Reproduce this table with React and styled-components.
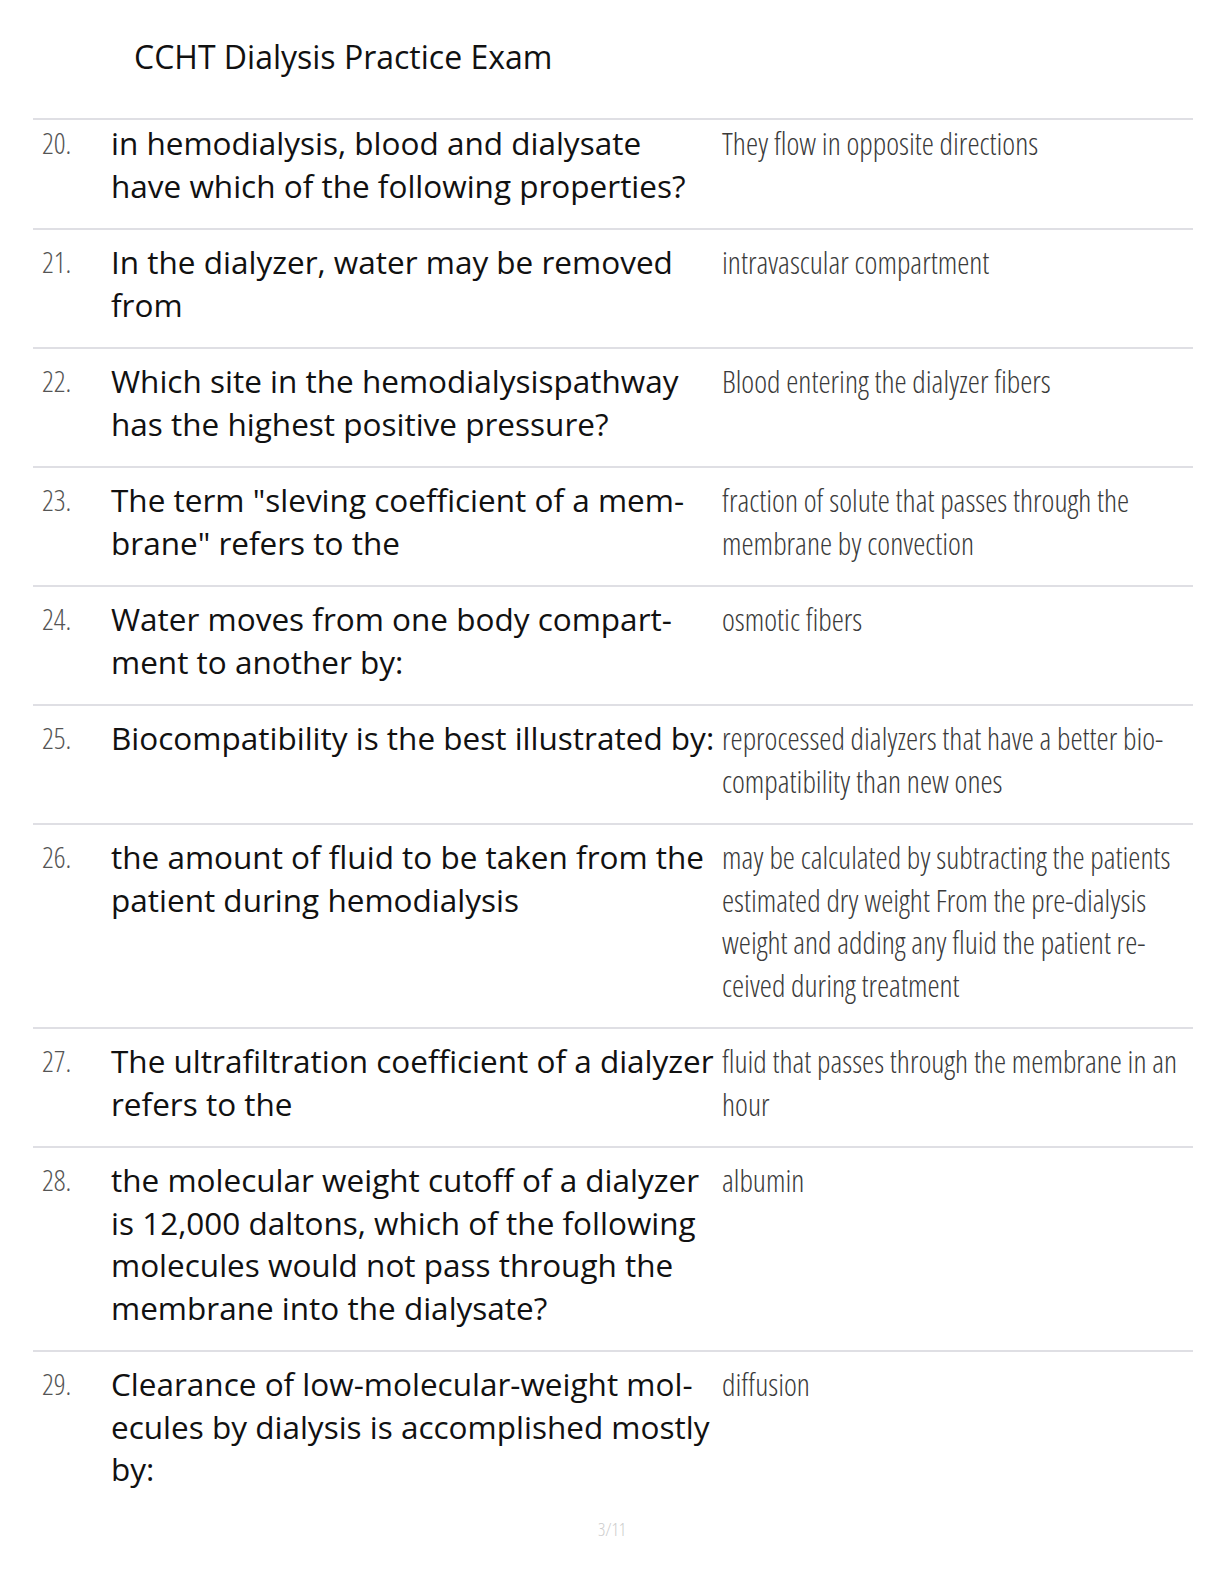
import React from "react";
import styled, { createGlobalStyle } from "styled-components";

const GlobalStyle = createGlobalStyle`
  html, body {
    margin: 0;
    padding: 0;
    background: #ffffff;
  }
  body {
    font-family: "Open Sans", "Noto Sans", sans-serif;
    color: #111;
  }
`;

const Page = styled.div`
  width: 1224px;
  min-height: 1584px;
  box-sizing: border-box;
  display: flex;
  flex-direction: column;
`;

const Title = styled.h1`
  margin: 0;
  padding: 36px 0 0 134px;
  height: 118px;
  box-sizing: border-box;
  font-size: 32px;
  font-weight: 400;
  line-height: 42px;
  color: #111;
`;

const Table = styled.div`
  margin: 0 31px 0 33px;
  border-top: 2px solid #dfdfe4;
`;

const Row = styled.div`
  display: grid;
  grid-template-columns: 63px 605px 1fr;
  column-gap: 6px;
  padding: ${(p) => (p.$first ? "2px" : "11px")} 0 21px 9px;
  border-bottom: ${(p) => (p.$last ? "none" : "2px solid #dfdfe4")};
`;

const Num = styled.div`
  font-family: "Open Sans", "Liberation Sans Narrow", sans-serif;
  font-stretch: 75%;
  font-weight: 300;
  font-size: 29px;
  line-height: 42.5px;
  color: #555;
  white-space: nowrap;
`;

const Question = styled.div`
  font-size: 31.5px;
  line-height: 42.5px;
  font-weight: 500;
  color: #111;
  hyphens: manual;
`;

const Answer = styled.div`
  font-family: "Open Sans", "Liberation Sans Narrow", sans-serif;
  font-stretch: 75%;
  font-weight: 300;
  font-size: 30.7px;
  line-height: 42.5px;
  color: #3a3a3a;
  hyphens: manual;
`;

const Footer = styled.div`
  margin-top: 5px;
  text-align: center;
  font-family: "Open Sans", sans-serif;
  font-stretch: 75%;
  font-weight: 300;
  font-size: 18px;
  color: #cccccc;
`;

const S = "\u00AD";

const items = [
  {
    n: "20.",
    q: "in hemodialysis, blood and dialysate have which of the following properties?",
    a: "They flow in opposite directions",
  },
  {
    n: "21.",
    q: "In the dialyzer, water may be removed from",
    a: "intravascular compartment",
  },
  {
    n: "22.",
    q: "Which site in the hemodialysispathway has the highest positive pressure?",
    a: "Blood entering the dialyzer fibers",
  },
  {
    n: "23.",
    q: `The term "sleving coefficient of a mem${S}brane" refers to the`,
    a: "fraction of solute that passes through the membrane by convection",
  },
  {
    n: "24.",
    q: `Water moves from one body compart${S}ment to another by:`,
    a: "osmotic fibers",
  },
  {
    n: "25.",
    q: "Biocompatibility is the best illustrated by:",
    a: `reprocessed dialyzers that have a better bio${S}compatibility than new ones`,
  },
  {
    n: "26.",
    q: "the amount of fluid to be taken from the patient during hemodialysis",
    a: `may be calculated by subtracting the patients estimated dry weight From the pre-dialysis weight and adding any fluid the patient re${S}ceived during treatment`,
  },
  {
    n: "27.",
    q: "The ultrafiltration coefficient of a dialyzer refers to the",
    a: "fluid that passes through the membrane in an hour",
  },
  {
    n: "28.",
    q: "the molecular weight cutoff of a dialyzer is 12,000 daltons, which of the following molecules would not pass through the membrane into the dialysate?",
    a: "albumin",
  },
  {
    n: "29.",
    q: `Clearance of low-molecular-weight mol${S}ecules by dialysis is accomplished mostly by:`,
    a: "diffusion",
  },
];

export default function App() {
  return (
    <>
      <GlobalStyle />
      <Page>
        <Title>CCHT Dialysis Practice Exam</Title>
        <Table>
          {items.map((it, i) => (
            <Row key={it.n} $first={i === 0} $last={i === items.length - 1}>
              <Num>{it.n}</Num>
              <Question>{it.q}</Question>
              <Answer>{it.a}</Answer>
            </Row>
          ))}
        </Table>
        <Footer>3/11</Footer>
      </Page>
    </>
  );
}
